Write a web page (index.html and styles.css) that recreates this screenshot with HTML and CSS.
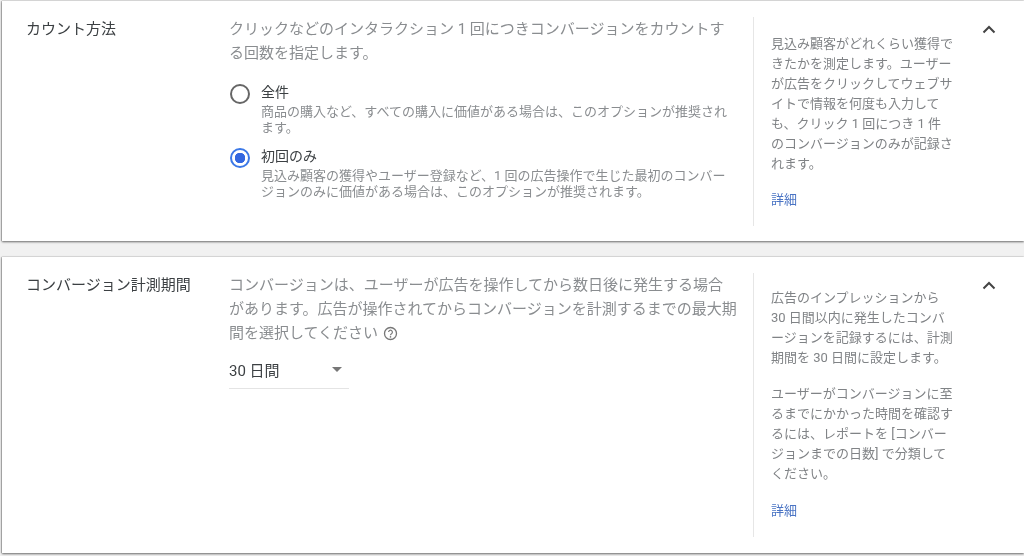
FILE: index.html
```html
<!DOCTYPE html>
<html lang="ja">
<head>
<meta charset="utf-8">
<title>コンバージョン設定</title>
<link rel="stylesheet" href="styles.css">
</head>
<body>
<section class="card card-count">
  <h2 class="title">カウント方法</h2>
  <div class="main">
    <p class="lead">クリックなどのインタラクション 1 回につきコンバージョンをカウントす<br>る回数を指定します。</p>
    <div class="options">
      <div class="option">
        <span class="radio"></span>
        <div class="option-text">
          <div class="option-label">全件</div>
          <div class="option-desc">商品の購入など、すべての購入に価値がある場合は、このオプションが推奨され<br>ます。</div>
        </div>
      </div>
      <div class="option">
        <span class="radio radio-on"></span>
        <div class="option-text">
          <div class="option-label">初回のみ</div>
          <div class="option-desc">見込み顧客の獲得やユーザー登録など、1 回の広告操作で生じた最初のコンバー<br>ジョンのみに価値がある場合は、このオプションが推奨されます。</div>
        </div>
      </div>
    </div>
  </div>
  <aside class="side">
    <p>見込み顧客がどれくらい獲得で<br>きたかを測定します。ユーザー<br>が広告をクリックしてウェブサ<br>イトで情報を何度も入力して<br>も、クリック 1 回につき 1 件<br>のコンバージョンのみが記録さ<br>れます。</p>
    <a class="more" href="#">詳細</a>
  </aside>
  <div class="toggle">
    <svg width="14" height="9" viewBox="0 0 14 9"><path d="M1.500 7.500 7 2l5.500 5.500" fill="none" stroke="#444" stroke-width="2"/></svg>
  </div>
</section>

<section class="card card-window">
  <h2 class="title">コンバージョン計測期間</h2>
  <div class="main">
    <p class="lead">コンバージョンは、ユーザーが広告を操作してから数日後に発生する場合<br>があります。広告が操作されてからコンバージョンを計測するまでの最大期<br>間を選択してください <svg class="help" width="15" height="15" viewBox="0 0 15 15"><circle cx="7.500" cy="7.500" r="6" fill="none" stroke="#777" stroke-width="1.300"/><path d="M5.600 6.100a1.900 1.900 0 1 1 2.900 1.600c-.7.400-1 .8-1 1.500" fill="none" stroke="#777" stroke-width="1.200"/><circle cx="7.500" cy="10.900" r=".8" fill="#777"/></svg></p>
    <div class="select">
      <span>30 日間</span>
      <span class="caret"></span>
    </div>
  </div>
  <aside class="side">
    <p>広告のインプレッションから<br>30 日間以内に発生したコンバ<br>ージョンを記録するには、計測<br>期間を 30 日間に設定します。</p>
    <p class="para2">ユーザーがコンバージョンに至<br>るまでにかかった時間を確認す<br>るには、レポートを [コンバー<br>ジョンまでの日数] で分類して<br>ください。</p>
    <a class="more" href="#">詳細</a>
  </aside>
  <div class="toggle">
    <svg width="14" height="9" viewBox="0 0 14 9"><path d="M1.500 7.500 7 2l5.500 5.500" fill="none" stroke="#444" stroke-width="2"/></svg>
  </div>
</section>
</body>
</html>
```
FILE: styles.css
```css
* { box-sizing: border-box; }
html, body { margin: 0; height: 100%; }
body {
  background: #f1f1f1;
  padding: 1px 0 0 2px;
  overflow: hidden;
  font-family: "Roboto", "Noto Sans CJK JP", sans-serif;
  display: flex;
  flex-direction: column;
  gap: 16px;
}
p { margin: 0; }
.card {
  display: flex;
  background: #fff;
  filter: blur(.3px);
  box-shadow: 0 1px 2px rgba(0,0,0,.55), -1px 0 1px rgba(0,0,0,.18), 0 -1px 1px rgba(0,0,0,.06);
}
.card-count { height: 240px; padding-top: 16px; }
.card-window { height: 296px; padding-top: 16px; }
.title {
  margin: 0;
  width: 227px;
  padding-left: 24px;
  font-size: 15px;
  font-weight: 400;
  line-height: 24px;
  color: #3c4043;
}
.main { width: 524px; }
.lead {
  font-size: 15px;
  line-height: 24px;
  color: #8a8d90;
  white-space: nowrap;
}
.options {
  margin-top: 17px;
  display: flex;
  flex-direction: column;
  gap: 10px;
}
.option { display: flex; }
.radio {
  flex: none;
  width: 20px;
  height: 20px;
  margin: 2px 11px 0 1px;
  border: 2px solid #666;
  border-radius: 50%;
}
.radio-on {
  border-color: #3b78e7;
  background: radial-gradient(circle, #3367e0 0 5px, #fff 5.500px);
}
.option-label {
  margin-bottom: 2px;
  font-size: 14px;
  line-height: 20px;
  color: #3c4043;
}
.option-desc {
  font-size: 13px;
  line-height: 16px;
  color: #8a8d90;
  white-space: nowrap;
}
.side {
  width: 231px;
  padding: 17px 0 0 17px;
  margin-bottom: 15px;
  border-left: 1px solid #e6e6e6;
  font-size: 13px;
  line-height: 20px;
  color: #808386;
  white-space: nowrap;
}
.card-window .side { padding-top: 15px; margin-bottom: 16px; }
.para2 { margin-top: 16px; }
.more {
  display: block;
  margin-top: 16px;
  color: #4a74c4;
  text-decoration: none;
}
.card-window .more { margin-top: 17px; }
.toggle { width: 38px; margin-left: -2px; padding-top: 8px; }
.toggle svg { display: block; }
.help { vertical-align: -3px; margin-left: 1px; }
.select {
  display: flex;
  align-items: center;
  justify-content: space-between;
  width: 120px;
  height: 35px;
  margin-top: 9px;
  padding: 0 7px 4px 0;
  border-bottom: 1px solid #e4e4e4;
  font-size: 15px;
  color: #3c4043;
}
.caret {
  width: 0;
  height: 0;
  border: 5px solid transparent;
  border-top-color: #777;
  border-bottom-width: 0;
}
```
